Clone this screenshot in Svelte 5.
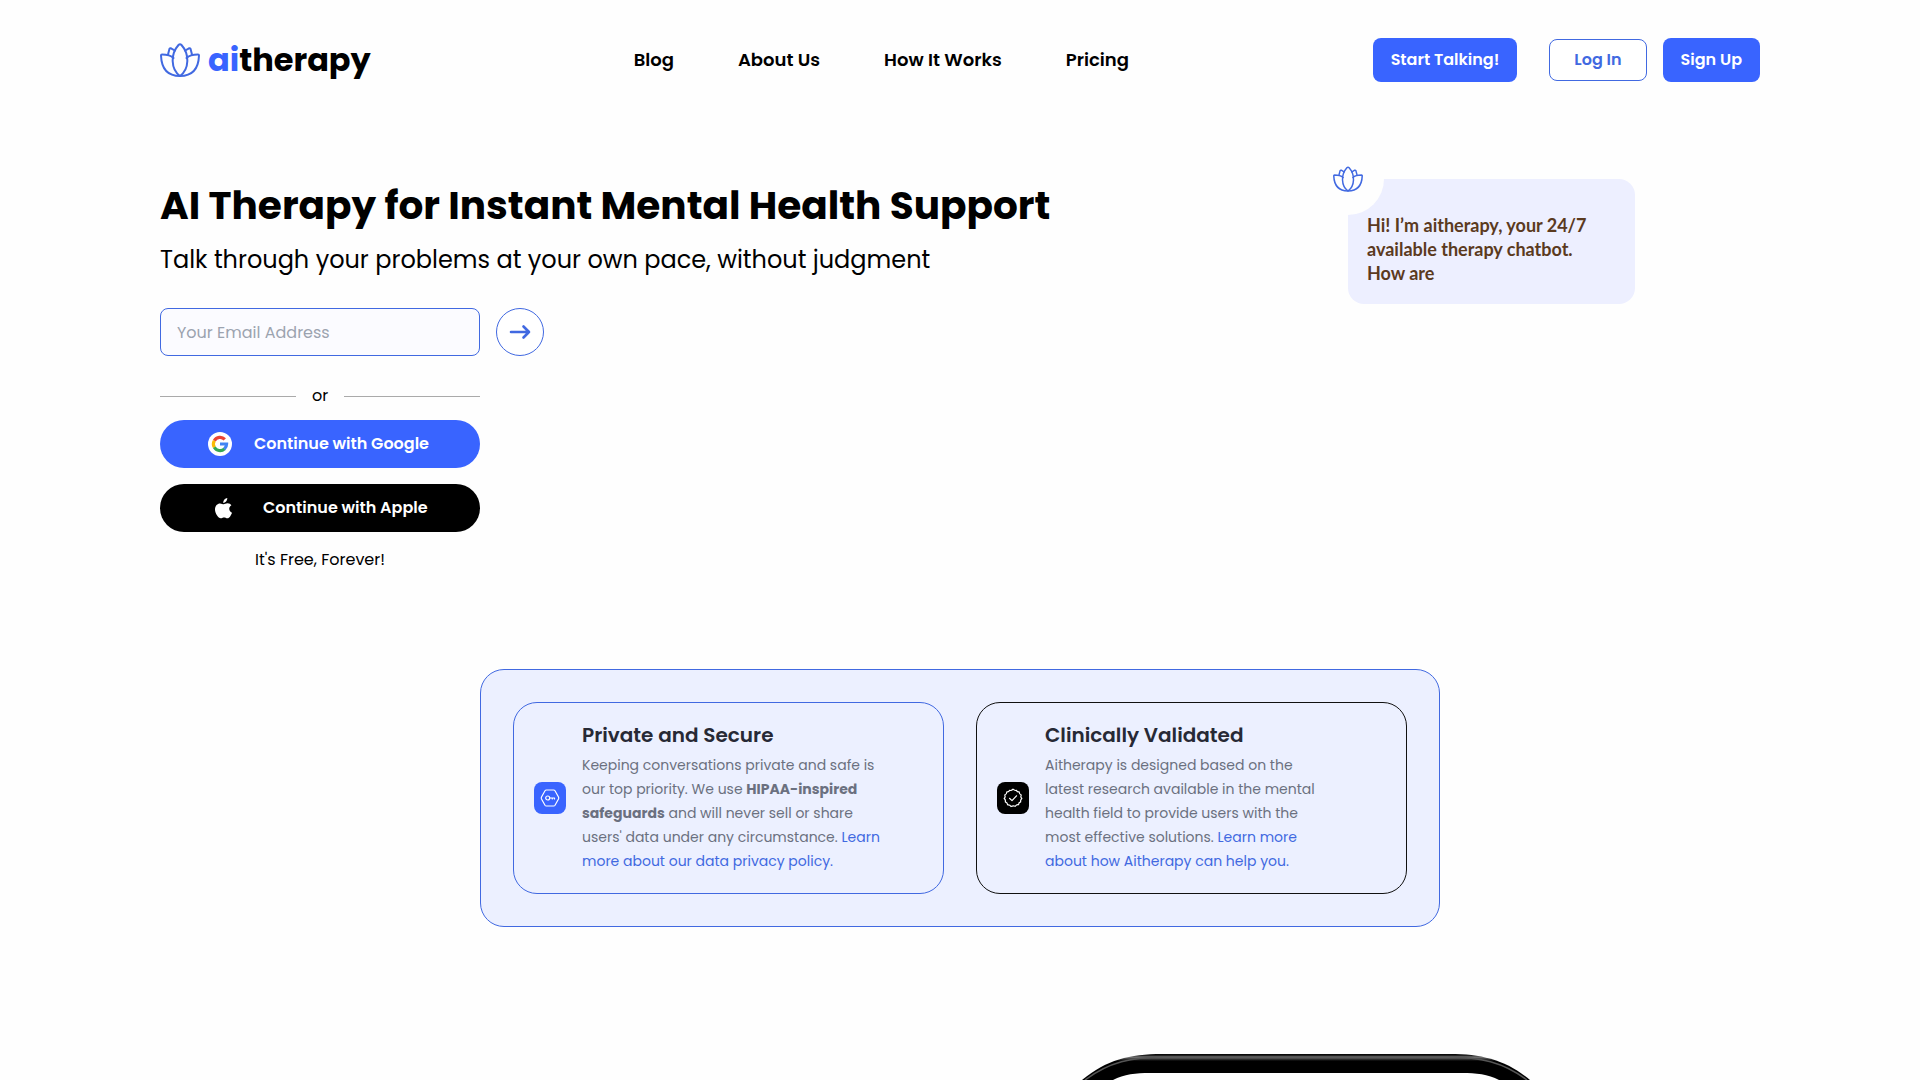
<script>
  const nav = ['Blog', 'About Us', 'How It Works', 'Pricing'];
  let email = $state('');
</script>

{#snippet lotus()}
  <svg viewBox="0 0 40 34" fill="none" stroke="currentColor" stroke-width="2" stroke-linejoin="round" stroke-linecap="round" aria-hidden="true">
    <path d="M20 33C10.500 26 10.500 11 18.500 2Q20 .5 21.500 2C29.500 11 29.500 26 20 33Z" />
    <path d="M13.500 15C11 12.500 6 11.500 2 11.500Q1 11.500 1 12.500C1.500 26 8 33 20 33C32 33 38.500 26 39 12.500Q39 11.500 38 11.500C34 11.500 29 12.500 26.500 15" />
    <path d="M8 11.500L9.500 5.800Q10 5 11 5.300L14.800 7.500M32 11.500L30.500 5.800Q30 5 29 5.300L25.200 7.500" />
  </svg>
{/snippet}

<header>
  <a class="brand" href="/" aria-label="aitherapy">
    {@render lotus()}
    <span><b>ai</b>therapy</span>
  </a>
  <nav>
    {#each nav as item}
      <a href="#{item}">{item}</a>
    {/each}
  </nav>
  <div class="actions">
    <button class="solid start">Start Talking!</button>
    <button class="outline">Log In</button>
    <button class="solid">Sign Up</button>
  </div>
</header>

<main>
  <section class="hero">
    <div class="intro">
      <h1>AI Therapy for Instant Mental Health Support</h1>
      <p class="lead">Talk through your problems at your own pace, without judgment</p>
      <form onsubmit={(e) => e.preventDefault()}>
        <input type="email" aria-label="Your Email Address" placeholder="Your Email Address" bind:value={email} />
        <button class="go" aria-label="Continue">
          <svg width="22" height="16" viewBox="0 0 22 16" fill="none" stroke="currentColor" stroke-width="2.600" stroke-linecap="round" stroke-linejoin="round"><path d="M2 8H20M14.500 2.500L20 8L14.500 13.500" /></svg>
        </button>
      </form>
      <div class="signin">
        <div class="or"><span>or</span></div>
        <button class="google">
          <svg width="24" height="24" viewBox="0 0 24 24" aria-hidden="true">
            <circle cx="12" cy="12" r="12" fill="#fff" />
            <g fill="none" stroke-width="3.200">
              <path d="M6.300 8.700A6.600 6.600 0 0 1 16.800 7.400" stroke="#ea4335" />
              <path d="M6.300 15.300A6.600 6.600 0 0 1 6.300 8.700" stroke="#fbbc05" />
              <path d="M16.500 16.800A6.600 6.600 0 0 1 6.300 15.300" stroke="#34a853" />
              <path d="M12 12H18.600A6.600 6.600 0 0 1 16.300 17" stroke="#4285f4" />
            </g>
          </svg>
          Continue with Google
        </button>
        <button class="apple">
          <svg width="17" height="21" viewBox="0 0 17 21" fill="#fff" aria-hidden="true">
            <path d="M12.300 0C12.500 2.700 10.500 5 8.200 5C8 2.600 9.900 .4 12.300 0ZM8.700 6.200C9.600 6.200 10.700 5.200 12.600 5.200C14.200 5.200 15.600 6.100 16.400 7.200C13.200 9.200 13.700 13.300 17 14.700C16.200 17 14.400 20.300 12.500 20.300C11.200 20.300 10.700 19.500 9.100 19.500C7.500 19.500 6.900 20.300 5.700 20.300C3.300 20.300 0 15.400 0 11.500C0 7.600 2.500 5.400 5 5.400C6.600 5.400 7.800 6.200 8.700 6.200Z" />
          </svg>
          Continue with Apple
        </button>
        <p>It's Free, Forever!</p>
      </div>
    </div>
    <div class="chat">
      <div class="avatar">{@render lotus()}</div>
      <p>Hi! I’m aitherapy, your 24/7 available therapy chatbot. How are</p>
    </div>
  </section>

  <section class="panel">
    <article>
      <span class="tile">
        <svg width="20" height="20" viewBox="0 0 20 20" fill="none" stroke="#fff" stroke-width="1.200" stroke-linejoin="round" stroke-linecap="round" aria-hidden="true">
          <path d="M6.300 2H13.700Q14.500 2 15 2.800L18.500 9Q19 10 18.500 11L15 17.200Q14.500 18 13.700 18H6.300Q5.500 18 5 17.200L1.500 11Q1 10 1.500 9L5 2.800Q5.500 2 6.300 2Z" />
          <circle cx="7.700" cy="10" r="2" /><path d="M9.700 10H14.500V11M12.300 10V11" />
        </svg>
      </span>
      <div>
        <h2>Private and Secure</h2>
        <p>Keeping conversations private and safe is our top priority. We use <strong>HIPAA-inspired safeguards</strong> and will never sell or share users' data under any circumstance. <a href="#privacy">Learn more about our data privacy policy.</a></p>
      </div>
    </article>
    <article class="dark">
      <span class="tile">
        <svg width="20" height="20" viewBox="0 0 20 20" fill="none" stroke="#fff" stroke-width="1.200" stroke-linejoin="round" stroke-linecap="round" aria-hidden="true">
          <path d="M10 1.200Q11.800 3 13.400 2.300Q14.200 4.300 16.200 3.900Q16.300 6.300 18.300 7Q17.200 8.800 18.800 10.500Q17.200 12 17.700 13.900Q15.700 14.300 15.500 16.700Q13.500 16.400 12.300 18.300Q10.300 17.300 8 18.500Q7 16.600 4.700 16.800Q4.300 14.500 2.300 13.900Q2.900 12 1.200 10.500Q2.800 8.800 1.700 7Q3.700 6.300 3.800 3.900Q5.800 4.300 6.600 2.300Q8.400 3 10 1.200Z" />
          <path d="M6.500 10.300L9 12.600L13.500 7.800" />
        </svg>
      </span>
      <div>
        <h2>Clinically Validated</h2>
        <p>Aitherapy is designed based on the latest research available in the mental health field to provide users with the most effective solutions. <a href="#research">Learn more about how Aitherapy can help you.</a></p>
      </div>
    </article>
  </section>

  <section class="showcase">
    <svg width="472" height="26" viewBox="0 0 472 26" aria-hidden="true">
      <defs>
        <linearGradient id="rim" x1="0" y1="0" x2="0" y2="1">
          <stop offset="0" stop-color="#000" /><stop offset=".06" stop-color="#222" />
          <stop offset=".12" stop-color="#777" /><stop offset=".2" stop-color="#333" />
          <stop offset=".27" stop-color="#000" />
        </linearGradient>
      </defs>
      <path d="M12 26C36 6 60 0 92 0H380C412 0 436 6 460 26Z" fill="url(#rim)" />
      <path d="M15 26C39 8 62 3 94 3H378C410 3 433 8 457 26" fill="none" stroke="#555" stroke-width="1.500" />
      <path d="M43 26C54 20 66 19 80 19H392C406 19 418 20 429 26Z" fill="#fefefe" />
    </svg>
  </section>
</main>

<style>
  :global(body) {
    background: #fefefe;
    color: #000;
    font-family: Poppins, Inter, sans-serif;
    font-size: 16px;
    line-height: 24px;
    overflow-x: hidden;
  }
  h1, h2, p { margin: 0; }
  a { color: inherit; text-decoration: none; }
  button, input { font: inherit; box-sizing: border-box; }
  button { cursor: pointer; border: 0; white-space: nowrap; }

  header {
    display: flex;
    align-items: center;
    justify-content: space-between;
    height: 120px;
    padding: 0 160px;
  }
  .brand { display: flex; align-items: center; gap: 8px; min-width: 230px; font-size: 32px; font-weight: 700; line-height: 44px; }
  .brand svg { width: 40px; height: 34px; color: #4169e1; }
  .brand b { color: #3964ff; font-weight: 700; }
  nav { display: flex; gap: 64px; font-size: 18px; font-weight: 600; }
  .actions { display: flex; align-items: center; gap: 16px; }
  .actions button { height: 44px; padding: 0 18px; border-radius: 8px; font-weight: 600; }
  .actions .start { margin-right: 16px; }
  .solid { background: #3964ff; color: #fff; }
  .actions .outline { height: 42px; padding: 0 24px; border: 1px solid #4169e1; background: #fff; color: #4169e1; }

  .hero { display: flex; justify-content: space-between; align-items: flex-start; padding: 59px 160px 0; }
  h1 { font-size: 39px; line-height: 54px; font-weight: 700; }
  .lead { margin-top: 9px; font-size: 24px; line-height: 36px; }
  form { display: flex; gap: 16px; margin-top: 30px; }
  input { width: 320px; height: 48px; padding: 0 16px; border: 1px solid #4169e1; border-radius: 8px; background: #fbfbff; }
  input::placeholder { color: #9ca3af; opacity: 1; }
  .go { display: grid; place-items: center; width: 48px; height: 48px; padding: 0; border: 1px solid #4169e1; border-radius: 50%; background: #fff; color: #4169e1; }
  .signin { display: flex; flex-direction: column; gap: 16px; width: 320px; margin-top: 28px; }
  .or { display: flex; align-items: center; gap: 16px; margin-bottom: -4px; }
  .or::before, .or::after { content: ''; flex: 1; height: 1px; background: #aaa; }
  .signin button { display: flex; align-items: center; height: 48px; border-radius: 24px; color: #fff; font-weight: 600; }
  .google { gap: 22px; padding: 0 48px; background: #3964ff; }
  .apple { gap: 31px; padding: 0 0 0 55px; background: #000; }
  .signin p { text-align: center; }

  .chat { position: relative; box-sizing: border-box; width: 287px; margin-right: 125px; padding: 34px 32px 19px 19px; border-radius: 16px; background: #edefff; color: #5b3a1e; font-family: Lato, sans-serif; font-size: 18px; font-weight: 700; line-height: 24px; }
  .avatar { position: absolute; top: -36px; left: -36px; display: grid; place-items: center; width: 72px; height: 72px; border-radius: 50%; background: #fefefe; color: #4169e1; }
  .avatar svg { width: 30px; height: 26px; }

  .panel { display: grid; grid-template-columns: 1fr 1fr; gap: 32px; box-sizing: border-box; max-width: 960px; margin: 97px auto 0; padding: 32px; border: 1px solid #4169e1; border-radius: 24px; background: #ecf0ff; }
  article { display: flex; align-items: center; gap: 16px; padding: 20px; border: 1px solid #4169e1; border-radius: 24px; }
  article.dark { border-color: #111; }
  .tile { display: grid; place-items: center; flex: none; width: 32px; height: 32px; border-radius: 8px; background: #3964ff; }
  .dark .tile { background: #000; }
  h2 { font-size: 20px; line-height: 24px; font-weight: 600; color: #272935; }
  article p { max-width: 304px; margin-top: 6px; font-size: 14px; color: #6b7080; }
  .dark p { max-width: 280px; }
  article p a { color: #4169e1; }
  strong { font-weight: 700; }

  .showcase { display: flex; justify-content: flex-end; padding: 127px 378px 0 0; }
  .showcase svg { display: block; }
</style>
